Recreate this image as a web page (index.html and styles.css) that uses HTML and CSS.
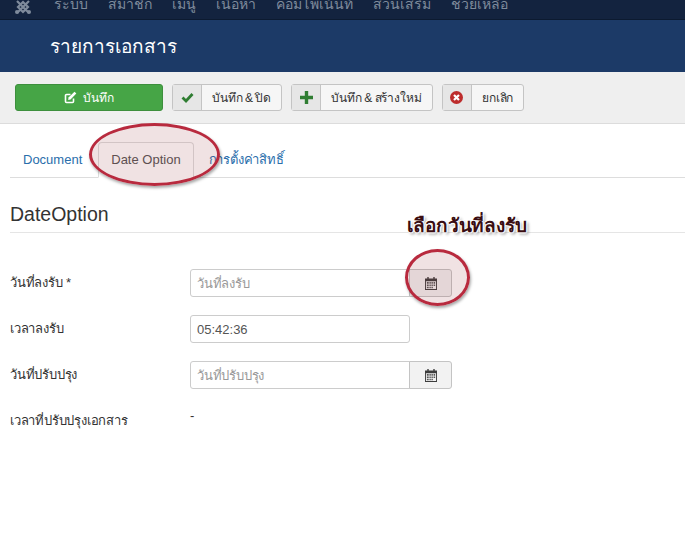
FILE: index.html
```html
<!DOCTYPE html>
<html lang="th">
<head>
<meta charset="utf-8">
<title>รายการเอกสาร</title>
<link rel="stylesheet" href="styles.css">
</head>
<body>
<nav class="topnav">
  <svg class="logo" width="18" height="19" viewBox="0 0 18 19"><path d="M3 1l12 12M15 1L3 13M4 7l5-5 5 5-5 5z" fill="none" stroke="#7f8b9c" stroke-width="2.2"/><circle cx="3" cy="12" r="2" fill="#7f8b9c"/><circle cx="15" cy="12" r="2" fill="#7f8b9c"/></svg>
  <span class="menu-item">ระบบ</span>
  <span class="menu-item">สมาชิก</span>
  <span class="menu-item">เมนู</span>
  <span class="menu-item">เนื้อหา</span>
  <span class="menu-item">คอมโพเน้นท์</span>
  <span class="menu-item">ส่วนเสริม</span>
  <span class="menu-item">ช่วยเหลือ</span>
</nav>
<header class="titlebar"><h1>รายการเอกสาร</h1></header>
<div class="toolbar">
  <button class="btn-save"><svg width="13" height="13" viewBox="0 0 13 13"><path d="M9.5 7.5v3a1 1 0 0 1-1 1h-6a1 1 0 0 1-1-1v-6a1 1 0 0 1 1-1h4" fill="none" stroke="#fff" stroke-width="1.6"/><path d="M4.5 6.5L10.5 .8l1.800 1.800-5.800 5.900-2.300.4z" fill="#fff"/></svg>บันทึก</button>
  <button class="btn"><span class="btn-icon"><svg width="13" height="11" viewBox="0 0 13 11"><path d="M1.5 5.500l3.500 3.500 6.500-7" fill="none" stroke="#2f7d32" stroke-width="2.800"/></svg></span><span class="btn-label">บันทึก &amp; ปิด</span></button>
  <button class="btn"><span class="btn-icon"><svg width="13" height="13" viewBox="0 0 13 13"><path d="M6.500 0v13M0 6.500h13" stroke="#2f7d32" stroke-width="3.400"/></svg></span><span class="btn-label">บันทึก &amp; สร้างใหม่</span></button>
  <button class="btn"><span class="btn-icon"><svg width="13" height="13" viewBox="0 0 13 13"><circle cx="6.500" cy="6.500" r="6.500" fill="#bd2c2c"/><path d="M4 4l5 5M9 4l-5 5" stroke="#fff" stroke-width="2.200"/></svg></span><span class="btn-label">ยกเลิก</span></button>
</div>
<main class="content">
  <ul class="tabs">
    <li class="tab first">Document</li>
    <li class="tab active">Date Option</li>
    <li class="tab thai">การตั้งค่าสิทธิ์</li>
  </ul>
  <h2 class="legend">DateOption</h2>
  <form class="form">
    <div class="row">
      <label>วันที่ลงรับ *</label>
      <div class="group"><input class="input" placeholder="วันที่ลงรับ"><span class="cal"><svg class="calicon" width="12" height="13" viewBox="0 0 13 14"><use href="#cal"/></svg></span></div>
    </div>
    <div class="row">
      <label>เวลาลงรับ</label>
      <input class="input" value="05:42:36">
    </div>
    <div class="row">
      <label>วันที่ปรับปรุง</label>
      <div class="group"><input class="input" placeholder="วันที่ปรับปรุง"><span class="cal"><svg class="calicon" width="12" height="13" viewBox="0 0 13 14"><use href="#cal"/></svg></span></div>
    </div>
    <div class="row static">
      <label>เวลาที่ปรับปรุงเอกสาร</label>
      <span class="dash">-</span>
    </div>
  </form>
</main>
<div class="ring ring-tab"></div>
<div class="ring ring-cal"></div>
<div class="note">เลือกวันที่ลงรับ</div>
<svg width="0" height="0" class="defs"><defs><symbol id="cal" viewBox="0 0 13 14"><path fill-rule="evenodd" fill="#3d3d3d" d="M0 1.500h13V14H0zM1 4.500v8.500h11V4.500z"/><path fill="#3d3d3d" d="M2.500 0h1.500v2H2.500zM9 0h1.500v2H9z"/><path fill="#555" d="M2 5.500h2v1.700H2zM4.800 5.500h1.500v1.700H4.800zM7 5.500h1.500v1.700H7zM9.300 5.500H11v1.700H9.300zM2 8h2v1.700H2zM4.800 8h1.500v1.700H4.800zM7 8h1.500v1.700H7zM9.300 8H11v1.700H9.300zM2 10.400h2v1.700H2zM4.800 10.400h1.500v1.700H4.800zM7 10.400h1.500v1.700H7z"/></symbol></defs></svg>
</body>
</html>
```
FILE: styles.css
```css
* { box-sizing: border-box; }
html, body { margin: 0; padding: 0; height: 100%; overflow: hidden; }
body { background: #fff; color: #333; font-family: "Liberation Sans", "Noto Sans", sans-serif; font-size: 13px; position: relative; }
.topnav { height: 20px; background: #13233f; border-bottom: 1px solid #0c1a30; display: flex; align-items: flex-end; padding-left: 14px; overflow: hidden; }
.logo { flex: none; margin-right: 22px; }
.menu-item { color: #7f8b9c; font-size: 14px; line-height: 20px; margin-right: 20px; white-space: nowrap; position: relative; top: -5px; }
.titlebar { height: 52px; background: #1c3a67; display: flex; align-items: center; padding-left: 50px; }
.titlebar h1 { margin: 0; color: #fff; font-size: 19px; font-weight: 400; }
.toolbar { height: 52px; background: #efefef; border-bottom: 1px solid #dcdcdc; display: flex; align-items: center; gap: 9px; padding: 0 0 0 15px; }
.toolbar button { font: inherit; font-size: 12px; padding: 0; height: 27px; border-radius: 3px; }
.btn-save { width: 148px; background: #46a546; border: 1px solid #3d8f3d; color: #fff; display: flex; align-items: center; justify-content: center; gap: 6px; }
.btn { background: #f6f6f6; border: 1px solid #c4c4c4; color: #333; display: flex; align-items: stretch; }
.btn-icon { width: 29px; background: #e6e6e6; border-right: 1px solid #c4c4c4; display: flex; align-items: center; justify-content: center; }
.btn-label { padding: 0 10px; display: flex; align-items: center; letter-spacing: -0.1px; word-spacing: -0.8px; white-space: pre; }
.content { padding: 18px 0 0 10px; }
.tabs { list-style: none; margin: 0; padding: 0; display: flex; gap: 2px; border-bottom: 1px solid #ddd; height: 36px; }
.tab { color: #2a6eab; padding: 0 12px; height: 36px; line-height: 34px; border: 1px solid transparent; border-radius: 4px 4px 0 0; white-space: nowrap; }
.tab.first { padding-right: 13px; }
.tab.thai { letter-spacing: -0.2px; }
.tab.active { color: #555; background: #fff; border-color: #ddd #ddd #fff; }
.legend { margin: 26px 0 0; padding-bottom: 6px; font-size: 19.500px; font-weight: 400; line-height: 20px; color: #333; border-bottom: 1px solid #e5e5e5; height: 29px; }
.form { padding-top: 36px; }
.row { display: flex; align-items: flex-start; height: 46px; }
.row label { width: 180px; line-height: 28px; font-size: 13px; color: #333; letter-spacing: -0.2px; }
.group { display: flex; }
.input { width: 220px; height: 28px; border: 1px solid #ccc; border-radius: 3px; font: inherit; color: #555; padding: 0 6px; }
.group .input { border-radius: 3px 0 0 3px; }
.input::placeholder { color: #999; letter-spacing: -0.2px; }
.cal { width: 43px; height: 28px; margin-left: -1px; background: #f2f2f2; border: 1px solid #c4c4c4; border-radius: 0 3px 3px 0; display: flex; align-items: center; justify-content: center; }
.static .dash { line-height: 18px; }
.ring { position: absolute; border: 3px solid #b82a3e; border-radius: 50%; background: rgba(150, 50, 60, 0.14); box-shadow: 1px 2px 3px rgba(0, 0, 0, 0.35); }
.ring-tab { left: 89px; top: 123px; width: 131px; height: 63px; }
.ring-cal { left: 405px; top: 249px; width: 65px; height: 57px; }
.note { position: absolute; left: 407px; top: 214px; font-size: 19px; letter-spacing: -0.1px; line-height: 24px; color: #3a0d12; font-weight: 700; white-space: nowrap; text-shadow: 1px 0 1px #fff, -1px 0 1px #fff, 0 1px 1px #fff, 0 -1px 1px #fff, 1px 1px 2px #fff, 2px 2px 3px rgba(0, 0, 0, 0.45); }
.defs { position: absolute; }
```
